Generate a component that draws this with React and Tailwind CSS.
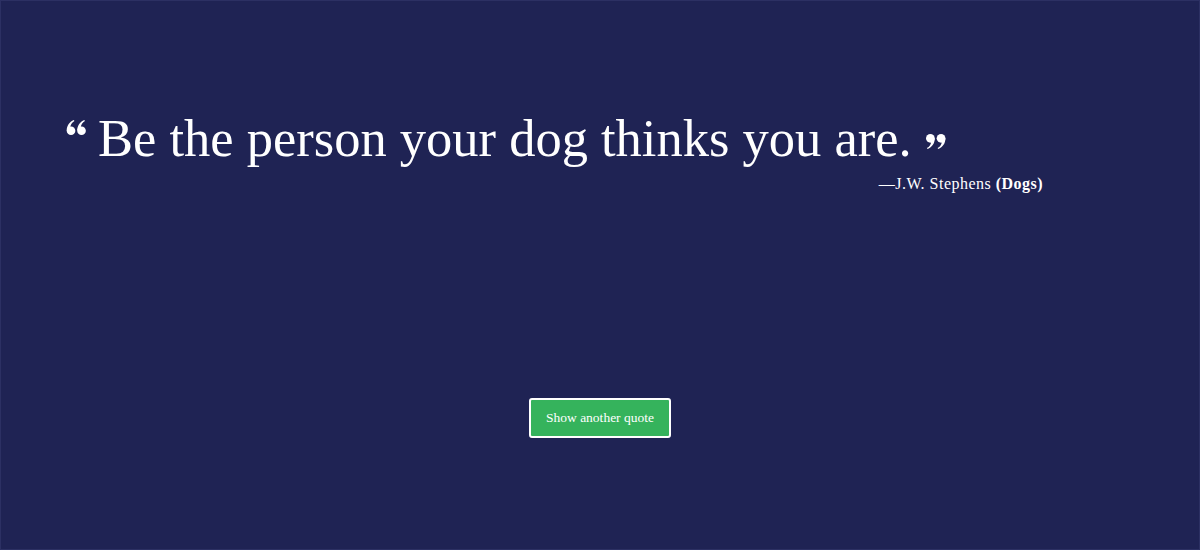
import React from 'react'

const quote = {
  text: 'Be the person your dog thinks you are.',
  author: 'J.W. Stephens',
  category: 'Dogs'
}

// ball-and-tail quotation mark, "99" shape; rotated for the opening one
const QuoteMark = ({ open = false, className = '' }) => (
  <svg viewBox="0 0 21 16" className={className} fill="currentColor">
    <g transform={open ? 'rotate(180 10.5 8)' : undefined}>
      <circle cx="4.6" cy="4.6" r="4.6" />
      <path d="M9.2 4.6 C9.2 10 6.5 13.8 1.6 16 L1 14.9 C3.6 13.4 5.2 11 5.4 8.2 Z" />
      <circle cx="15.8" cy="4.6" r="4.6" />
      <path d="M20.4 4.6 C20.4 10 17.7 13.8 12.8 16 L12.2 14.9 C14.8 13.4 16.4 11 16.6 8.2 Z" />
    </g>
  </svg>
)

const App = () => {
  return (
    <div className="h-[550px] w-full bg-[#1f2354] border border-[#2c3063] font-['Liberation_Serif',serif] text-white flex flex-col">
      {/* Quote */}
      <div className="ml-[62px] w-[980px] pt-[105px]">
        <p className="flex items-start text-[52.5px] leading-[64px]">
          <QuoteMark open className="w-[22px] h-[15px] mt-[14px] ml-[2px] mr-[11px] shrink-0" />
          <span>{quote.text}</span>
          <QuoteMark className="w-[20px] h-[17px] mt-[27px] ml-[14px] shrink-0" />
        </p>
        <p className="text-right text-[16px] leading-5 mt-[4px] tracking-[0.03em]">
          &mdash;{quote.author} <span className="font-bold">({quote.category})</span>
        </p>
      </div>

      {/* Button */}
      <div className="flex justify-center mt-[204px]">
        <button className="h-10 w-[142px] bg-[#35b35c] border-2 border-white rounded-[3px] text-[13.5px] text-white">
          Show another quote
        </button>
      </div>
    </div>
  )
}

export default App
